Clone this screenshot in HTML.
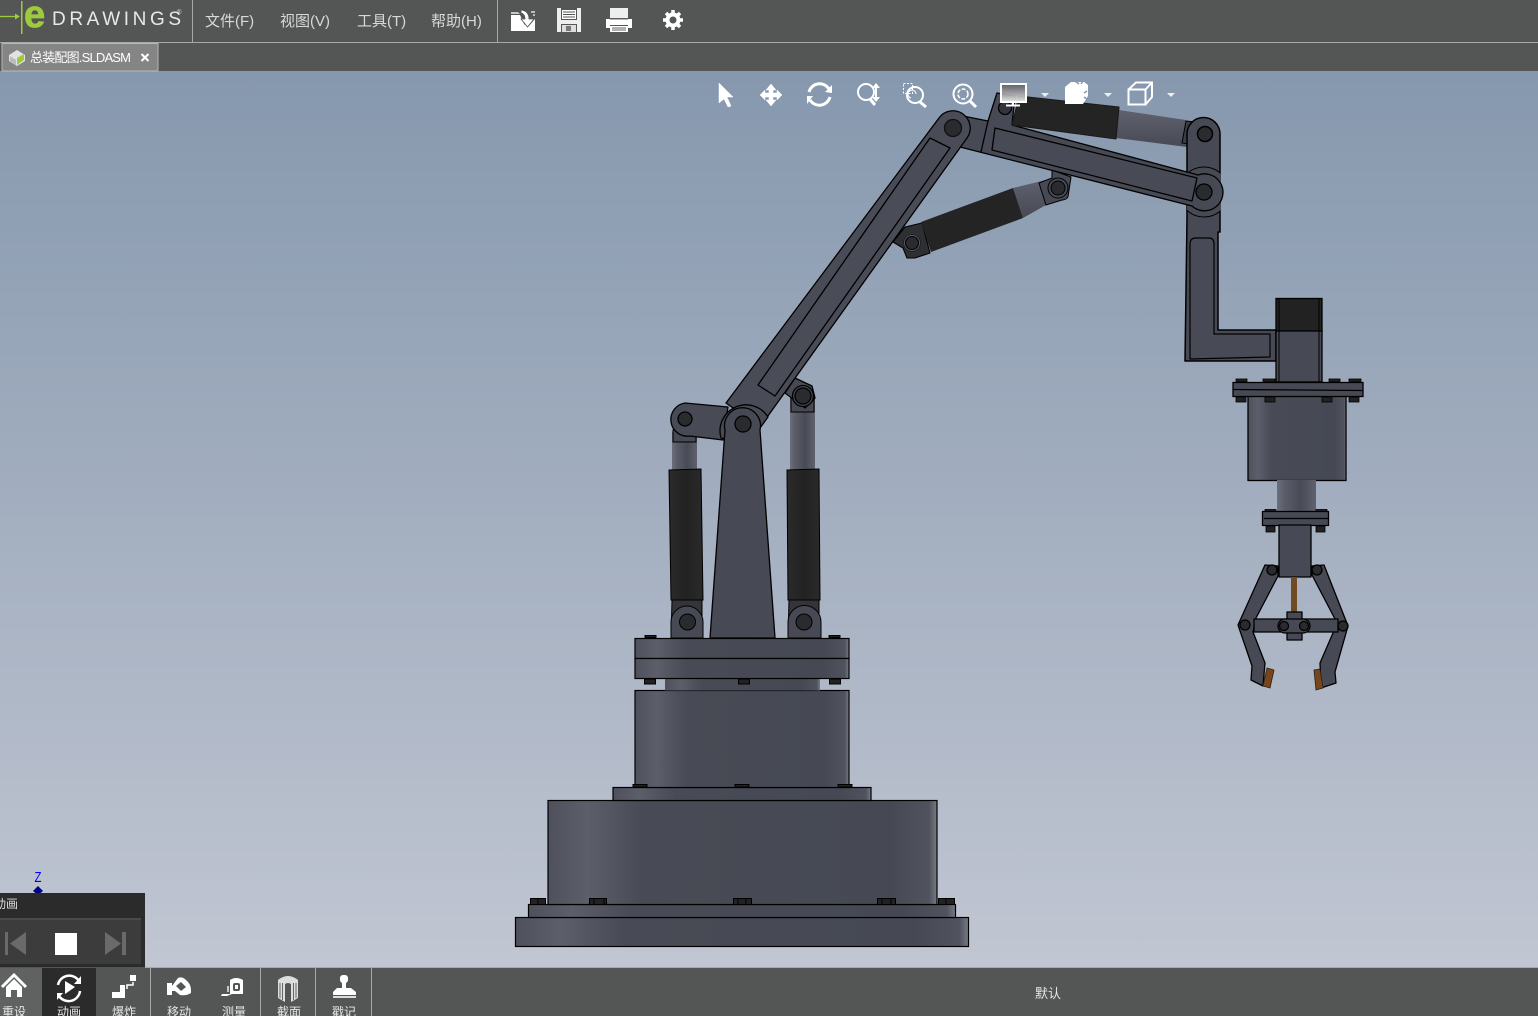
<!DOCTYPE html>
<html><head><meta charset="utf-8"><title>eDrawings</title>
<style>
html,body{margin:0;padding:0;background:#545656;overflow:hidden}
svg{display:block}
text{font-family:"Liberation Sans","Noto Sans CJK SC",sans-serif}
</style></head><body>
<svg width="1538" height="1016" viewBox="0 0 1538 1016" xmlns="http://www.w3.org/2000/svg">
<defs>
<linearGradient id="bg" x1="0" y1="0" x2="0" y2="1"><stop offset="0" stop-color="#8698ae"/><stop offset="1" stop-color="#c1c6d2"/></linearGradient>
<linearGradient id="cy" x1="0" y1="0" x2="1" y2="0"><stop offset="0" stop-color="#4e515c"/><stop offset=".1" stop-color="#5c5e6a"/><stop offset=".24" stop-color="#484b55"/><stop offset=".88" stop-color="#464953"/><stop offset=".98" stop-color="#50535e"/><stop offset="1" stop-color="#777b86"/></linearGradient>
<linearGradient id="rod" x1="0" y1="0" x2="1" y2="0"><stop offset="0" stop-color="#6b6f7b"/><stop offset=".2" stop-color="#5a5d69"/><stop offset=".6" stop-color="#484b55"/><stop offset="1" stop-color="#5f626e"/></linearGradient>
<linearGradient id="drk" x1="0" y1="0" x2="1" y2="0"><stop offset="0" stop-color="#2b2b2b"/><stop offset=".5" stop-color="#222"/><stop offset="1" stop-color="#2a2a2a"/></linearGradient>
<linearGradient id="rod2" x1="0" y1="0" x2="0" y2="1"><stop offset="0" stop-color="#5f626e"/><stop offset="1" stop-color="#474a54"/></linearGradient>
<linearGradient id="mon" x1="0" y1="0" x2="0" y2="1"><stop offset="0" stop-color="#555" stop-opacity=".8"/><stop offset="1" stop-color="#e8e8e8"/></linearGradient>
<clipPath id="colclip"><rect x="1187" y="150" width="33.500" height="80"/></clipPath>
</defs>

<rect x="0" y="71" width="1538" height="896" fill="url(#bg)"/>

<!-- ============ base ============ -->
<g stroke="#000" stroke-width="1.2">
<rect x="515.5" y="917.5" width="453" height="29" fill="url(#cy)"/>
<rect x="528.5" y="904.5" width="427" height="13" fill="url(#cy)"/>
<rect x="548" y="800.5" width="389" height="104" fill="url(#cy)"/>
<rect x="613" y="787.5" width="258" height="13" fill="url(#cy)"/>
<rect x="635" y="690.5" width="214" height="97" fill="url(#cy)"/>
<rect x="665" y="678" width="155" height="12.5" fill="url(#cy)" stroke="none"/>
<rect x="635" y="638.5" width="214" height="20" fill="url(#cy)"/>
<rect x="635" y="658.5" width="214" height="20" fill="url(#cy)"/>
</g>
<g fill="#222" stroke="#000" stroke-width="1">
<rect x="530.5" y="898.5" width="15" height="6"/><rect x="589.5" y="898.5" width="17" height="6"/><rect x="733.5" y="898.5" width="18" height="6"/><rect x="877.5" y="898.5" width="18" height="6"/><rect x="938.5" y="898.5" width="16" height="6"/>
<path d="M538 899v5M594 899v5M604 899v5M738 899v5M746 899v5M882 899v5M891 899v5M946 899v5" fill="none"/>
<rect x="633" y="784.5" width="14" height="2.5"/><rect x="735" y="784.5" width="14" height="2.5"/><rect x="838" y="784.5" width="14" height="2.5"/>
<rect x="645" y="635.5" width="11" height="2"/><rect x="739" y="635.5" width="11" height="2"/><rect x="829" y="635.5" width="11" height="2"/>
<rect x="644.5" y="679" width="11" height="5"/><rect x="738.5" y="679" width="11" height="5"/><rect x="829.5" y="679" width="11" height="5"/>
</g>

<!-- ============ left and right lift cylinders ============ -->
<g stroke="#000" stroke-width="1">
<rect x="672" y="432" width="25" height="38" fill="url(#rod)" stroke="none"/>
<rect x="790" y="396" width="25" height="74" fill="url(#rod)" stroke="none"/>
<path d="M669 470 L701 469 L703 600 L671 600Z" fill="url(#drk)"/>
<path d="M787 470 L819 469 L820 600 L788 600Z" fill="url(#drk)"/>
<path d="M672 600H702V638H671Z" fill="#33353b"/>
<path d="M789 600H819V638H788Z" fill="#33353b"/>
<path d="M671 638V622A16 16 0 0 1 703 622V638Z" fill="#474a54"/>
<path d="M788 638V622A16 16 0 0 1 821 622V638Z" fill="#474a54"/>
<circle cx="687.500" cy="622" r="8" fill="#2a2b2e"/>
<circle cx="804" cy="622" r="8" fill="#2a2b2e"/>
<rect x="673" y="430" width="23" height="12" fill="#474a54"/>
<rect x="791" y="398" width="23" height="14" fill="#474a54"/>
</g>

<!-- ============ top cylinder rod + clevis behind column ============ -->
<g stroke="#000" stroke-width="1">
<path d="M1119 110L1186 120L1187 147L1116 138Z" fill="url(#rod2)" stroke="none"/>
<path d="M1186 121L1204 123V146L1182 143Z" fill="#3c3e47"/>
<path d="M1013 188L1050 179L1046 205L1023 218Z" fill="url(#rod2)" stroke="none"/>
<path d="M1039 183L1052 178L1052 170L1071 177L1068 197Q1066 200 1062 200L1046 205Z" fill="#474a54"/>
<circle cx="1058" cy="188" r="10" fill="#474a54"/><circle cx="1058" cy="188" r="7" fill="#2a2b2e"/>
</g>

<!-- ============ elbow column ============ -->
<g stroke="#000" stroke-width="1.500" stroke-linejoin="round">
<path d="M1187 218V134A16.500 16.500 0 0 1 1220 134V232L1218 232V330H1276V361H1185Z" fill="#474a54"/>
<path d="M1190 359V244Q1190 238 1196 238H1209Q1214 238 1214 244L1214 334H1270V357Z" fill="#484b55" stroke-width="1.200"/>
<circle cx="1205" cy="134" r="7.500" fill="#2a2b2e"/>
<circle cx="1204" cy="192" r="25" fill="#474a54" stroke-width="1" clip-path="url(#colclip)"/>
</g>

<!-- ============ forearm ============ -->
<g stroke="#000" stroke-width="1.300" stroke-linejoin="round">
<path d="M958 115L988 121L997 93L1015 96L1012 125L1187 172L1198 175A18.500 18.500 0 1 1 1192 206L960 147Z" fill="#474a54"/>
<path d="M995 128L1197 178L1192 201L992 150Z" fill="#484b55"/>
<path d="M988 121L981 152" fill="none"/>
<circle cx="1005" cy="108" r="6.500" fill="#33353b"/>
<circle cx="1204" cy="192" r="8" fill="#2a2b2e"/>
</g>
<!-- cylinders on forearm -->
<g stroke="#000" stroke-width="1.100" stroke-linejoin="round">
<path d="M1019 96L1119 107L1116 139L1012 125Z" fill="#242424" stroke="#1b1b1b"/>
<path d="M893 242L905 227L922 223L930 253L915 258H907L903 248Z" fill="#2e2f33"/>
<path d="M921 222L1013 188L1023 218L931 252Z" fill="#242424" stroke="none"/>
<circle cx="912" cy="243" r="8.500" fill="#5a5d68" stroke="#222"/><circle cx="912" cy="243" r="6.500" fill="#2a2b2e"/>
</g>

<!-- ============ main arm ============ -->
<g stroke="#000" stroke-width="1.3" stroke-linejoin="round">
<path d="M785 393L795 378L812 386L815 398L805 408Z" fill="#474a54"/>
<circle cx="803" cy="396" r="10.500" fill="#474a54"/>
<circle cx="803" cy="396" r="8" fill="#2a2b2e"/>
<path d="M939 118A17 17 0 0 1 967 138L760 427L726 403Z" fill="#494c56"/>
<path d="M758 385L930 138L950 148L775 396Z" fill="#4a4d57"/>
<circle cx="953" cy="128" r="8.500" fill="#2a2b2e" stroke="#111"/>
<!-- left link -->
<path d="M685 403L728 407L723 440L690 436A16.500 16.500 0 0 1 685 403Z" fill="#484b55"/>
<circle cx="685" cy="419" r="7" fill="#2a2b2e"/>
<path d="M721 438A26 26 0 0 1 768 417L760 428L745 445Z" fill="#484b55"/>
<!-- tower -->
<path d="M710 638L725 430A18 18 0 1 1 760 430L775 638Z" fill="#474a54"/>
<circle cx="743" cy="424" r="8" fill="#2a2b2e"/>
</g>

<!-- ============ motor / flange ============ -->
<g stroke="#000" stroke-width="1.300">
<rect x="1276" y="298.500" width="46" height="33" fill="#222"/>
<rect x="1276" y="331" width="46" height="51" fill="#474a54"/>
<path d="M1279 298V382M1319 298V382" fill="none" stroke-width="1"/>
<rect x="1248" y="396" width="98" height="84.500" fill="url(#cy)"/>
<rect x="1277" y="480" width="39" height="31" fill="url(#rod)" stroke="none"/>
<rect x="1233" y="382.500" width="130" height="14" fill="#474a54"/>
<path d="M1233 389.500L1363 390.500" fill="none"/>
</g>
<g fill="#222" stroke="#000" stroke-width=".8">
<rect x="1236" y="379" width="11" height="2.500"/><rect x="1263" y="379" width="12" height="2.500"/><rect x="1329" y="379" width="11" height="2.500"/><rect x="1349" y="379" width="12" height="2.500"/>
<rect x="1236" y="397" width="10" height="5"/><rect x="1265" y="397" width="10" height="5"/><rect x="1322" y="397" width="10" height="5"/><rect x="1349" y="397" width="10" height="5"/>
<rect x="1265" y="509.500" width="11" height="2"/><rect x="1316" y="509.500" width="11" height="2"/>
<rect x="1266" y="526" width="9" height="6"/><rect x="1316" y="526" width="9" height="6"/>
</g>
<g stroke="#000" stroke-width="1.300" stroke-linejoin="round">
<rect x="1262.500" y="511.500" width="66" height="14" fill="#474a54"/>
<path d="M1264 518.500H1328" fill="none"/>
<rect x="1279" y="525" width="32" height="52" fill="#474a54"/>
<rect x="1291" y="577" width="6" height="37" fill="#704a22" stroke="none"/>
<!-- left finger -->
<path d="M1265 565L1278 566L1278 576L1256 618L1253 632L1265 663L1263 686L1251 680L1252 666L1238 625Z" fill="#474a54"/>
<path d="M1267 668L1274 670L1270 688L1263 686Z" fill="#7a4518" stroke="#222" stroke-width=".8"/>
<!-- right finger -->
<path d="M1324 565L1312 566L1312 575L1335 619L1333 633L1320 663L1321 688L1336 683L1335 672L1348 626Z" fill="#474a54"/>
<path d="M1314 670L1320 669L1323 688L1316 690Z" fill="#7a4518" stroke="#222" stroke-width=".8"/>
<!-- bar -->
<rect x="1254" y="619" width="84" height="13" fill="#474a54"/>
<rect x="1287" y="612" width="15" height="28" fill="#474a54"/>
<rect x="1278" y="619" width="32" height="14" rx="7" fill="#474a54"/>
<circle cx="1245" cy="625" r="5" fill="#2a2b2e"/>
<circle cx="1343" cy="626" r="5" fill="#2a2b2e"/>
<circle cx="1272" cy="570" r="5" fill="#2a2b2e"/>
<circle cx="1317" cy="570" r="5" fill="#2a2b2e"/>
<circle cx="1284" cy="626" r="4.500" fill="#2a2b2e"/>
<circle cx="1304" cy="626" r="4.500" fill="#2a2b2e"/>
</g>

<!-- ============ view toolbar icons ============ -->
<g fill="#fff" stroke="#fff">
<path d="M719 83L733 97H727L731 106L728 107L724 99L719 103Z" stroke-width=".5"/>
<path d="M771 84L776 90H773V93H777V90L782 95L777 100V97H773V100H776L771 106L766 100H769V97H765V100L760 95L765 90V93H769V90H766Z" stroke-width=".5"/>
<path d="M809 92A11 11 0 0 1 829 89M830 97A11 11 0 0 1 810 100" fill="none" stroke-width="3"/>
<path d="M825 92L832 93L832 85ZM813 96L807 96L807 104Z" stroke="none"/>
<g fill="none" stroke-width="2"><circle cx="866" cy="92" r="8"/><path d="M870 99L875 105" stroke-width="3"/><path d="M876 85V99" stroke-width="2"/></g>
<path d="M876 83L880 88H872ZM876 102L880 97H872Z" stroke="none"/>
<g fill="none" stroke-width="2"><circle cx="915" cy="95" r="8"/><path d="M920 102L926 107" stroke-width="3"/><rect x="903.500" y="83.500" width="9" height="10" stroke-dasharray="2 1.500" stroke-width="1"/><path d="M911 98A4 4 0 1 1 916 94" stroke-width="1"/></g>
<g fill="none" stroke-width="2"><circle cx="963" cy="94" r="9.500"/><path d="M970 101L976 107" stroke-width="3"/><circle cx="963" cy="94" r="5" stroke-width="1.500" stroke-dasharray="4 1.500"/></g>
</g>
<g>
<rect x="1001" y="84" width="25" height="18" fill="url(#mon)" stroke="#fff" stroke-width="2"/>
<path d="M1013 102V105M1006 105.500H1020" stroke="#fff" stroke-width="2"/>
<path d="M1041 93H1049L1045 97Z M1104 93H1112L1108 97Z M1167 93H1175L1171 97Z" fill="#eee"/>
<path d="M1065 87L1071 82H1084L1088 85V96L1083 104H1065Z" fill="#fff"/>
<path d="M1075 81L1079 84M1083 81L1081 84M1087 91L1084 93M1087 99L1084 97" stroke="#8698ae" stroke-width="1.500" fill="none"/>
<path d="M1128.500 89.500H1145.500V104.500H1128.500ZM1128.500 89.500L1136 82.500H1152V97L1145.500 104.500M1145.500 89.500L1152 82.500" fill="none" stroke="#fff" stroke-width="2"/>
</g>

<!-- ============ Z triad ============ -->
<text x="34.500" y="882" font-size="15" fill="#0000ff" textLength="7" lengthAdjust="spacingAndGlyphs" style="font-family:'Liberation Sans',sans-serif">Z</text>
<path d="M38 886L43 891L38 895L33 891Z" fill="#000080"/>

<!-- ============ top bars ============ -->
<rect x="0" y="0" width="1538" height="71" fill="#545656"/>
<rect x="0" y="42" width="1538" height="1" fill="#a9a9a9"/>
<rect x="192" y="0" width="1" height="42" fill="#a9a9a9"/>
<rect x="497" y="0" width="1" height="42" fill="#a9a9a9"/>
<!-- logo -->
<path d="M0 16.500H16" stroke="#9ecb3c" stroke-width="1.300"/><path d="M15 13.500L20 16.500L15 19.500Z" fill="#9ecb3c"/>
<rect x="21" y="1" width="1.500" height="33" fill="#9ecb3c"/>
<text x="24" y="27" font-size="38" font-weight="700" fill="#9ecb3c" stroke="#9ecb3c" stroke-width=".8">e</text>
<text x="52" y="25" font-size="19" fill="#e8e8e8" letter-spacing="3.600">DRAWINGS</text>
<text x="177" y="14" font-size="6" fill="#ddd">®</text>
<g font-size="15" fill="#d8d8d8">
<text x="205" y="26">文件(F)</text>
<text x="280" y="26">视图(V)</text>
<text x="357" y="26">工具(T)</text>
<text x="431" y="26">帮助(H)</text>
</g>
<!-- file icons -->
<path d="M511 12H518L520 14H511Z" fill="#c8c8c8"/>
<path d="M511 15H520L524 24L528 27L535 19V31H511Z" fill="#fff"/>
<path d="M521 10Q529 11 529 19H534L527.500 27L521 19H525Q525 14 521 13Z" fill="#fff" stroke="#545656" stroke-width=".8"/>
<path d="M531 12H535M533 15H535" stroke="#ddd" stroke-width="1.500"/>
<path d="M557 8H581V32H557Z" fill="#eee"/><path d="M561 8H577V20H561ZM561 24H577V32H561Z" fill="#555"/><path d="M562 10H576V19H562Z" fill="#fff"/><path d="M563 12H575M563 14.500H575M563 17H575" stroke="#555" stroke-width="1"/><path d="M562 25H576V32H562Z" fill="#ddd"/><rect x="566" y="26" width="5" height="5" fill="#777"/>
<path d="M610 8H628V18H610Z" fill="#eee"/><path d="M606 19H632V28H628V25H610V28H606Z" fill="#fff"/><path d="M610 26H628V32H610Z" fill="#fff"/><path d="M612 28H626M612 30H626" stroke="#666" stroke-width="1"/>
<path d="M610 19H628" stroke="#666" stroke-width="1"/>
<g transform="translate(673,20)"><circle r="5.500" fill="none" stroke="#fff" stroke-width="4"/><g stroke="#fff" stroke-width="3.500"><path d="M0-10V-7M0 7V10M-10 0H-7M7 0H10M-7-7L-5-5M5 5L7 7M-7 7L-5 5M5-5L7-7"/></g></g>
<!-- tab -->
<rect x="2" y="43.500" width="156" height="27.500" fill="#858585" stroke="#b8b8b8" stroke-width="1"/>
<path d="M9 55L17 50L25 55V61L17 66L9 61Z" fill="#e2e2e2"/><path d="M17 58L24 54V60L17 65Z" fill="#9ecb3c"/><path d="M10 56L16 60V65L10 61Z" fill="#bbb"/>
<text x="30" y="62" font-size="13" fill="#fff" textLength="101" lengthAdjust="spacing">总装配图.SLDASM</text>
<path d="M141.500 54L148.500 61M148.500 54L141.500 61" stroke="#fff" stroke-width="2"/>

<!-- ============ animation panel ============ -->
<rect x="0" y="893" width="145" height="74" fill="#2b2b2b"/>
<rect x="0" y="918" width="141" height="46" fill="#3c3c3c"/>
<rect x="0" y="918" width="141" height="2" fill="#4a4a4a"/>
<text x="-6" y="908" font-size="12" fill="#ddd">动画</text>
<path d="M5 932H8V955H5ZM26 932V955L10 943.500Z" fill="#6a6a6a"/>
<rect x="55" y="933" width="22" height="22" fill="#fff"/>
<path d="M105 932V955L121 943.500ZM122 932H126V955H122Z" fill="#6a6a6a"/>

<!-- ============ bottom bar ============ -->
<rect x="0" y="967" width="1538" height="49" fill="#545656"/>
<rect x="145" y="967" width="1393" height="1" fill="#a9a9a9"/>
<rect x="0" y="968" width="42" height="48" fill="#606262"/>
<rect x="42" y="968" width="54" height="48" fill="#2b2b2b"/>
<rect x="150" y="968" width="1" height="48" fill="#a9a9a9"/>
<rect x="260" y="968" width="1" height="48" fill="#a9a9a9"/>
<rect x="315" y="968" width="1" height="48" fill="#a9a9a9"/>
<rect x="371" y="968" width="1" height="48" fill="#a9a9a9"/>
<!-- home -->
<path d="M2 987L14 975L26 987" fill="none" stroke="#fff" stroke-width="3"/><path d="M6 987L14 979L22 987V997H17V990H11V997H6Z" fill="#fff"/>
<!-- anim -->
<path d="M58 985A11.500 11.500 0 0 1 79 981M80 991A11.500 11.500 0 0 1 59 996" fill="none" stroke="#fff" stroke-width="2.500"/>
<path d="M74 984L81 984L81 976ZM63 993L57 993L57 1000Z" fill="#fff"/><path d="M65 981L75 987L65 994Z" fill="#fff"/>
<!-- explode -->
<path d="M112 998V992H120V985H125V998Z" fill="#fff"/><rect x="130" y="975" width="6" height="6" fill="#fff"/><path d="M133 982V985H127V989" stroke="#fff" stroke-width="1.500" fill="none"/>
<!-- move -->
<path d="M167 983H172V986L178 978Q182 976 186 980Q191 984 191 990V993Q186 996 180 995L175 991H172V995H167Z" fill="#fff"/><path d="M176 986L181 982L186 987L181 991Z" fill="#545656"/>
<!-- measure -->
<path d="M230 980Q236 976 243 980V994H230Z" fill="#fff"/><rect x="233" y="983" width="7" height="8" rx="2" fill="#545656"/><rect x="235" y="985" width="3" height="4" fill="#fff"/><path d="M222 994H232L227 996H221Z" fill="#fff"/><path d="M228 986V992" stroke="#eee" stroke-width="1.500"/>
<!-- section -->
<path d="M278 980Q288 972 298 980V998L291 1002V984Q288 982 285 984V1002L278 998Z" fill="#ddd"/><path d="M280 983V998M282.500 983V1000M293.500 983V1000M296 983V998" stroke="#666" stroke-width="1"/>
<!-- stamp -->
<rect x="340" y="975" width="8" height="8" rx="3" fill="#fff"/><path d="M342 982H346V988H342Z" fill="#fff"/><path d="M337 988H351L356 992V995H333V992Z" fill="#fff"/><path d="M333 996H356V998H333Z" fill="#ddd"/>
<g font-size="12" fill="#e6e6e6" text-anchor="middle">
<text x="14" y="1016">重设</text>
<text x="69" y="1016">动画</text>
<text x="124" y="1016">爆炸</text>
<text x="179" y="1016">移动</text>
<text x="234" y="1016">测量</text>
<text x="289" y="1016">截面</text>
<text x="344" y="1016">戳记</text>
</g>
<text x="1048" y="998" font-size="13" fill="#e6e6e6" text-anchor="middle">默认</text>
</svg>
</body></html>
